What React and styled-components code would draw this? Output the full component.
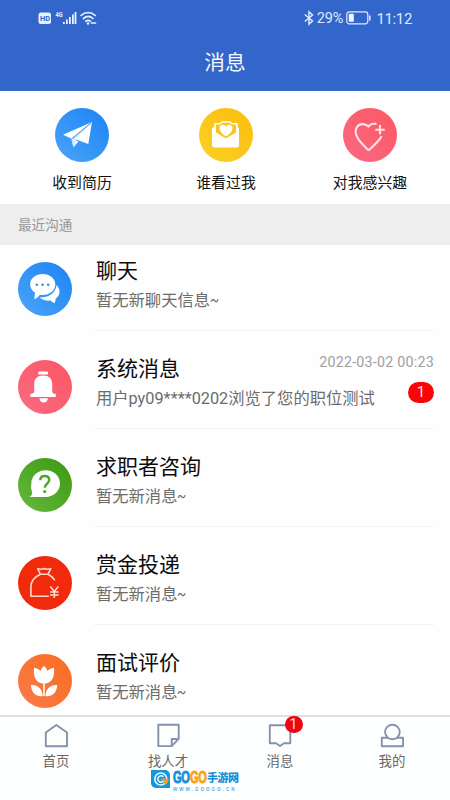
import React from 'react'
import styled, { createGlobalStyle } from 'styled-components'

const GlobalStyle = createGlobalStyle`
    * {
        box-sizing: border-box;
    }
    body {
        margin: 0;
        background: #fefefe;
        font-family: Roboto, 'Noto Sans CJK SC', sans-serif;
        overflow: hidden;
    }
    svg {
        display: block;
        flex: none;
    }
`

const Screen = styled.div`
    position: relative;
    display: flex;
    flex-direction: column;
    width: 450px;
    height: 800px;
    overflow: hidden;
`

const Header = styled.header`
    height: 90.5px;
    flex: none;
    background: #3266ca;
    color: #f4f8ff;
`

const StatusBar = styled.div`
    display: flex;
    justify-content: space-between;
    align-items: center;
    height: 36px;
    padding: 0 38px 0 38px;
`

const StatusGroup = styled.div`
    display: flex;
    align-items: center;
    font-size: 15px;
    line-height: 18px;
    color: #dfeaff;
`

const Percent = styled.span`
    margin: 1px 3px 0 3px;
    font-size: 14.5px;
    letter-spacing: -0.1px;
`

const Clock = styled.span`
    margin: 1px 0 0 4px;
    font-size: 15px;
    letter-spacing: -0.35px;
`

const Title = styled.h1`
    margin: 0;
    height: 54px;
    font-size: 20.7px;
    font-weight: 400;
    line-height: 55px;
    text-align: center;
`

const Shortcuts = styled.div`
    display: grid;
    grid-template-columns: repeat(3, 1fr);
    flex: none;
    height: 113.5px;
    padding: 17px 8px 0 10px;
`

const Shortcut = styled.div`
    display: flex;
    flex-direction: column;
    align-items: center;
    gap: 9px;
    font-size: 14.9px;
    line-height: 24px;
    color: #111;
`

const SectionTitle = styled.div`
    flex: none;
    height: 40.5px;
    padding-left: 18px;
    background: #eeeeee;
    color: #979797;
    font-size: 13.6px;
    line-height: 42px;
`

const List = styled.div`
    flex: 1;
    min-height: 0;
    padding-left: 18px;
    margin-top: -11.5px;
    overflow: hidden;
`

const Row = styled.div`
    display: flex;
    align-items: flex-end;
    height: 98px;
`

const RowIcon = styled.div`
    padding-bottom: 15px;
`

const RowBody = styled.div`
    display: flex;
    justify-content: space-between;
    flex: 1;
    height: 75px;
    margin: 0 16px 0 22px;
    padding-left: 2px;
    border-bottom: 1.5px solid ${props => (props.$last ? 'transparent' : '#f2f2f2')};
`

const RowTitle = styled.div`
    font-size: 21px;
    line-height: 30px;
    color: #0c0c0c;
`

const RowText = styled.div`
    margin-top: 2px;
    font-size: 16.3px;
    line-height: 26px;
    white-space: nowrap;
    color: #6c6c6c;
`

const Tilde = styled.span`
    display: inline-block;
    transform: scaleX(0.82);
    transform-origin: left;
`

const RowSide = styled.div`
    display: flex;
    flex-direction: column;
    align-items: flex-end;
    flex: 1;
    width: 0;
    white-space: nowrap;
    font-size: 14.3px;
    line-height: 17px;
    letter-spacing: 0.22px;
    color: #a0a0a0;
`

const Count = styled.span`
    width: 26px;
    height: 21px;
    margin-top: 11px;
    border-radius: 11px;
    background: #fa0505;
    color: #ffe3e3;
    font-size: 15px;
    line-height: 21px;
    text-align: center;
`

const TabBar = styled.nav`
    display: grid;
    grid-template-columns: repeat(4, 112px);
    flex: none;
    height: 85px;
    border-top: 2px solid #dfe0e1;
    background: #fdfefe;
`

const Tab = styled.div`
    display: flex;
    flex-direction: column;
    align-items: center;
    padding-top: 6px;
    font-size: 13.4px;
    line-height: 22px;
    color: #686868;
`

const TabIcon = styled.div`
    position: relative;
    height: 28px;
`

const TabBadge = styled.span`
    position: absolute;
    left: 16.5px;
    top: -7px;
    width: 18px;
    height: 17px;
    border-radius: 9px;
    background: #ea0712;
    color: #ffdcdc;
    font-size: 14px;
    line-height: 17px;
    text-align: center;
`

const Watermark = styled.div`
    position: absolute;
    left: 150px;
    top: 769px;
    display: flex;
    gap: 2px;
`

const MarkText = styled.div`
    display: flex;
    flex-direction: column;
`

const MarkName = styled.div`
    display: flex;
    align-items: center;
    height: 17.5px;
    padding-bottom: 1px;
    font-family: 'Liberation Sans', 'Noto Sans CJK SC', sans-serif;
    font-weight: 700;
    white-space: nowrap;
    color: #168fdb;
`

const Go = styled.span`
    width: 17px;
    font-size: 16.5px;
    line-height: 15px;
    letter-spacing: -0.5px;
    transform: scaleX(0.67);
    transform-origin: left;
    -webkit-text-stroke: 0.9px;
    color: ${props => props.color};
`

const MarkCn = styled.span`
    font-size: 11px;
    font-weight: 900;
    letter-spacing: -0.5px;
`

const MarkUrl = styled.div`
    font-family: 'Liberation Sans', sans-serif;
    font-size: 4.5px;
    font-weight: 700;
    line-height: 5px;
    letter-spacing: 2.05px;
    color: #58ade0;
`

const Round = ({ id, from, to, children }) => (
    <svg width="54" height="54" viewBox="0 0 54 54" fill="#fff">
        <defs>
            <linearGradient id={id} x1="1" y1="0" x2="0" y2="1">
                <stop offset="0" stopColor={from} />
                <stop offset="1" stopColor={to} />
            </linearGradient>
        </defs>
        <circle cx="27" cy="27" r="27" fill={`url(#${id})`} />
        {children}
    </svg>
)

const PlaneIcon = () => (
    <Round id="plane" from="#1b83f5" to="#4ba5f8">
        <path d="M37 14 8 26.7l8.2 3.8Z" />
        <path d="M37 14 16.2 30.5l2.1 9.1 2.7-7.2Z" fill="#d9eafd" />
        <path d="M37 14 20.5 31.3l12.8 4.7Z" />
        <path d="m20.8 32.3-2.5 7.3 5.2-6.2Z" />
        <path d="M36 15 17.2 30.6" stroke="#3a97f7" strokeWidth="1" />
    </Round>
)

const LetterIcon = () => (
    <Round id="letter" from="#fbbd0c" to="#fad126">
        <path d="M13 20.5 16 18v7l11 7 11-7v-7l2 2.5V37a2.5 2.5 0 0 1-2.5 2.5h-22A2.5 2.5 0 0 1 13 37Z" />
        <path
            d="M16.2 25v-9.2h5l1.8-1.8h8l1.8 1.8h5V25L27 31.5Z"
            fill="#fbc61b"
            stroke="#fff"
            strokeWidth="1.6"
        />
        <path d="M27 28.5c-4-2.8-6.5-5.4-6.5-8.3 0-3.6 4.6-4.7 6.5-1.6 1.9-3.1 6.5-2 6.5 1.6 0 2.9-2.5 5.5-6.5 8.3Z" />
    </Round>
)

const HeartIcon = () => (
    <Round id="heart" from="#fc5762" to="#fa6a83">
        <g fill="none" stroke="#ffe4e6" strokeWidth="2.1" strokeLinecap="round" strokeLinejoin="round">
            <path d="M32.7 15.9c-3-.6-5.500.4-7.200 2.700-3.300-3.300-8.700-3.400-11.400.3-2.500 3.600-1.500 8.200 1.200 12.100 2.600 3.900 6.100 7.200 9.200 10.300.8.800 1.600.8 2.400 0 4.200-4.100 8.500-7.700 11.300-12.400" />
            <path d="M37 17v9.300M32.300 21.700h9.400" strokeLinecap="butt" />
        </g>
    </Round>
)

const ChatIcon = () => (
    <Round id="chat" from="#1b83f5" to="#4ba5f8">
        <path d="M38.5 23c4.400 4.200 4 10.300-.8 13.800l-.9 4.500c-1.700-.5-3.400-1.500-4.500-2.700-4.200.5-8.500-.7-10.700-3.100C31 35.500 37.800 31 38.500 23Z" />
        <path d="M24.7 12c7 0 12.600 4.600 12.600 10.500S31.700 33 24.700 33c-1 0-1.900-.1-2.800-.3-1.400 2-3.300 3.500-5.600 4.500l.7-6.500c-3-1.900-4.900-4.900-4.900-8.200C12.100 16.600 17.700 12 24.700 12Z" />
        <g fill="#2f90f6">
            <circle cx="18.8" cy="22.7" r="1.3" />
            <circle cx="24.5" cy="22.7" r="1.3" />
            <circle cx="30.2" cy="22.7" r="1.3" />
        </g>
    </Round>
)

const BellIcon = () => (
    <Round id="bell" from="#fc5762" to="#fa6a83">
        <rect x="20.3" y="11.5" width="9.7" height="2.9" rx=".6" />
        <path d="M25.2 15.6c5.6 0 9 3.2 9 8.3v7.6c0 1.5 1.2 2.3 3.6 2.5v3H12.400v-3c2.400-.2 3.800-1 3.800-2.500v-7.600c0-5.100 3.400-8.300 9-8.300Z" />
        <path d="M21.4 38.3h8.600c-.4 2.800-2.100 4.200-4.300 4.200s-3.900-1.400-4.300-4.200Z" />
    </Round>
)

const QuestionIcon = () => (
    <Round id="question" from="#3a980f" to="#67b93f">
        <path d="M27.7 12.3c8 0 14.3 5.8 14.3 13.3S35.7 39 27.7 39H11.3c2-1 2.9-2.4 2.900-4.500a15 15 0 0 1-.9-8.900c0-7.500 6.400-13.300 14.400-13.300Z" />
        <path
            d="M22.3 22.3c.1-2.600 1.800-4.200 4.400-4.200 2.700 0 4.500 1.500 4.500 3.900 0 3.600-4.400 3.700-4.400 7.800"
            fill="none"
            stroke="#4ea626"
            strokeWidth="2.5"
        />
        <circle cx="26.7" cy="33.5" r="1.6" fill="#4ea626" />
    </Round>
)

const BagIcon = () => (
    <Round id="bag" from="#f02a0b" to="#f02a0b">
        <g fill="none" stroke="#ffd9d0" strokeWidth="1.6" strokeLinejoin="round">
            <path d="m22.4 18.3-2.7-5.7c2.3 1 4.2 1 6.5 0 2.3 1 4.2 1 6.6 0l-2.9 5.7Z" />
            <path d="M22.4 18.3c-6.5 3-9.5 6.7-9.5 12.5v9.4h18M29.9 18.3c3.3 1.5 5.4 3.2 7.1 6" />
            <path d="m32.3 30.5 4 5 4-5M36.3 35.5V42M32 36h8.6M32 39h8.6" />
        </g>
    </Round>
)

const FlowerIcon = () => (
    <Round id="flower" from="#fa6d20" to="#fb7a4c">
        <path d="M26 12c1.6 1.3 2.7 2.9 3.5 4.9 1.4-1.4 3.6-2.6 6.5-3.1.8 9-1.7 15-8.7 15.7h-2.6c-7-.7-9.5-6.7-8.7-15.7 2.9.5 5.1 1.7 6.5 3.1.8-2 1.9-3.6 3.5-4.9Z" />
        <path d="M25.3 28h1.5v14h-1.5Z" />
        <path d="M13 31c6.5-.7 11.4 3.6 11.8 11.2C18 43 13.3 38.8 13 31ZM39.2 31c-6.5-.7-11.4 3.6-11.8 11.2C34.2 43 38.9 38.8 39.2 31Z" />
    </Round>
)

const LineIcon = ({ children }) => (
    <svg width="24" height="26" viewBox="0 0 24 26" fill="none" stroke="#8492ac" strokeWidth="1.9" strokeLinejoin="round">
        {children}
    </svg>
)

const tabs = [
    { label: '首页', icon: <path d="M12.3 2 23 9.6v13.6H1.8V9.6Z" /> },
    {
        label: '找人才',
        icon: <path d="M2.3 1.7h20.4v14.2l-7 7.2H2.3ZM15.7 23v-7h6.8" />,
    },
    {
        label: '消息',
        badge: 1,
        icon: <path d="M1.8 2.3h20.5v18H16L12 23l-4-2.7H1.8Z" />,
    },
    {
        label: '我的',
        icon: (
            <>
                <path d="M6 14.7H1.8v8.5h21.3v-8.5H6" />
                <circle cx="12.4" cy="9" r="7.3" fill="#fdfefe" />
            </>
        ),
    },
]

const shortcuts = [
    { label: '收到简历', icon: <PlaneIcon /> },
    { label: '谁看过我', icon: <LetterIcon /> },
    { label: '对我感兴趣', icon: <HeartIcon /> },
]

const messages = [
    { title: '聊天', text: '暂无新聊天信息', empty: true, icon: <ChatIcon /> },
    {
        title: '系统消息',
        text: '用户py09****0202浏览了您的职位测试',
        time: '2022-03-02 00:23',
        count: 1,
        icon: <BellIcon />,
    },
    { title: '求职者咨询', text: '暂无新消息', empty: true, icon: <QuestionIcon /> },
    { title: '赏金投递', text: '暂无新消息', empty: true, icon: <BagIcon /> },
    { title: '面试评价', text: '暂无新消息', empty: true, icon: <FlowerIcon /> },
]

const SignalIcons = () => (
    <svg width="60" height="16" viewBox="0 0 60 16" fill="#e9f1ff">
        <rect x="0.5" y="2.5" width="12.5" height="11.5" rx="2.5" />
        <text x="2" y="11.3" fontSize="7.5" fontWeight="700" fontFamily="Roboto" fill="#3266ca">HD</text>
        <text x="17.5" y="7" fontSize="6.5" fontWeight="700" fontFamily="Roboto" textLength="7" lengthAdjust="spacingAndGlyphs">4G</text>
        <path d="M25 12h1.8v2H25ZM28 9.5h1.8V14H28ZM31 7h1.8v7H31ZM34 4.5h1.8V14H34ZM36.6 2h1.8v12h-1.8Z" />
        <g fill="none" stroke="#e9f1ff" strokeWidth="1.7" strokeLinecap="round">
            <path d="M43 5.5c4.3-4 10-4 14.3 0M45.5 8.5c3-2.6 6.6-2.6 9.4 0M47.8 11.3c1.5-1.2 3.2-1.2 4.7 0" />
            <path d="M53.5 13h4" />
        </g>
        <circle cx="50" cy="13.5" r="1.2" />
    </svg>
)

const BluetoothIcon = () => (
    <svg width="10" height="16" viewBox="0 0 10 16" fill="none" stroke="#dfeaff" strokeWidth="1.5">
        <path d="M.8 4.5 8.5 11 5 14V2l3.5 3L.8 11.5" />
    </svg>
)

const BatteryIcon = () => (
    <svg width="26" height="14" viewBox="0 0 26 14">
        <rect x=".8" y=".8" width="21" height="12" rx="2.5" fill="none" stroke="#dfeaff" strokeWidth="1.2" />
        <rect x="2.8" y="2.8" width="5" height="8" rx=".8" fill="#f2f7ff" />
        <path d="M23.8 4.5v5" stroke="#dfeaff" strokeWidth="1.5" />
    </svg>
)

const MarkLogo = () => (
    <svg width="21" height="20" viewBox="0 0 21 20">
        <path d="M1 1h14a5 5 0 0 1 5 5v13H6a5 5 0 0 1-5-5Z" fill="#1596dc" />
        <circle cx="10.8" cy="10" r="6" fill="none" stroke="#e5f7ff" strokeWidth="1.7" />
        <path d="M13.5 7.8c-2.2-2-5.7-.6-5.7 2.2 0 3 3.7 4.3 5.9 2" fill="none" stroke="#fff" strokeWidth="1.5" />
        <path d="M11 9.5h7.5c0 3-1 5-3 6.3L13.5 13l1-1.5H11Z" fill="#f59b22" />
    </svg>
)

const App = () => (
    <>
        <GlobalStyle />
        <Screen>
            <Header>
                <StatusBar>
                    <StatusGroup>
                        <SignalIcons />
                    </StatusGroup>
                    <StatusGroup>
                        <BluetoothIcon />
                        <Percent>29%</Percent>
                        <BatteryIcon />
                        <Clock>11:12</Clock>
                    </StatusGroup>
                </StatusBar>
                <Title>消息</Title>
            </Header>
            <Shortcuts>
                {shortcuts.map(item => (
                    <Shortcut key={item.label}>
                        {item.icon}
                        {item.label}
                    </Shortcut>
                ))}
            </Shortcuts>
            <SectionTitle>最近沟通</SectionTitle>
            <List>
                {messages.map((item, i) => (
                    <Row key={item.title}>
                        <RowIcon>{item.icon}</RowIcon>
                        <RowBody $last={i === messages.length - 1}>
                            <div>
                                <RowTitle>{item.title}</RowTitle>
                                <RowText>
                                    {item.text}
                                    {item.empty && <Tilde>~</Tilde>}
                                </RowText>
                            </div>
                            {item.time && (
                                <RowSide>
                                    {item.time}
                                    <Count>{item.count}</Count>
                                </RowSide>
                            )}
                        </RowBody>
                    </Row>
                ))}
            </List>
            <TabBar>
                {tabs.map(tab => (
                    <Tab key={tab.label}>
                        <TabIcon>
                            <LineIcon>{tab.icon}</LineIcon>
                            {tab.badge && <TabBadge>{tab.badge}</TabBadge>}
                        </TabIcon>
                        {tab.label}
                    </Tab>
                ))}
            </TabBar>
            <Watermark>
                <MarkLogo />
                <MarkText>
                    <MarkName>
                        <Go color="#168fdb">GO</Go>
                        <Go color="#f7a414">GO</Go>
                        <MarkCn>手游网</MarkCn>
                    </MarkName>
                    <MarkUrl>WWW.GOOGO.CN</MarkUrl>
                </MarkText>
            </Watermark>
        </Screen>
    </>
)

export default App
